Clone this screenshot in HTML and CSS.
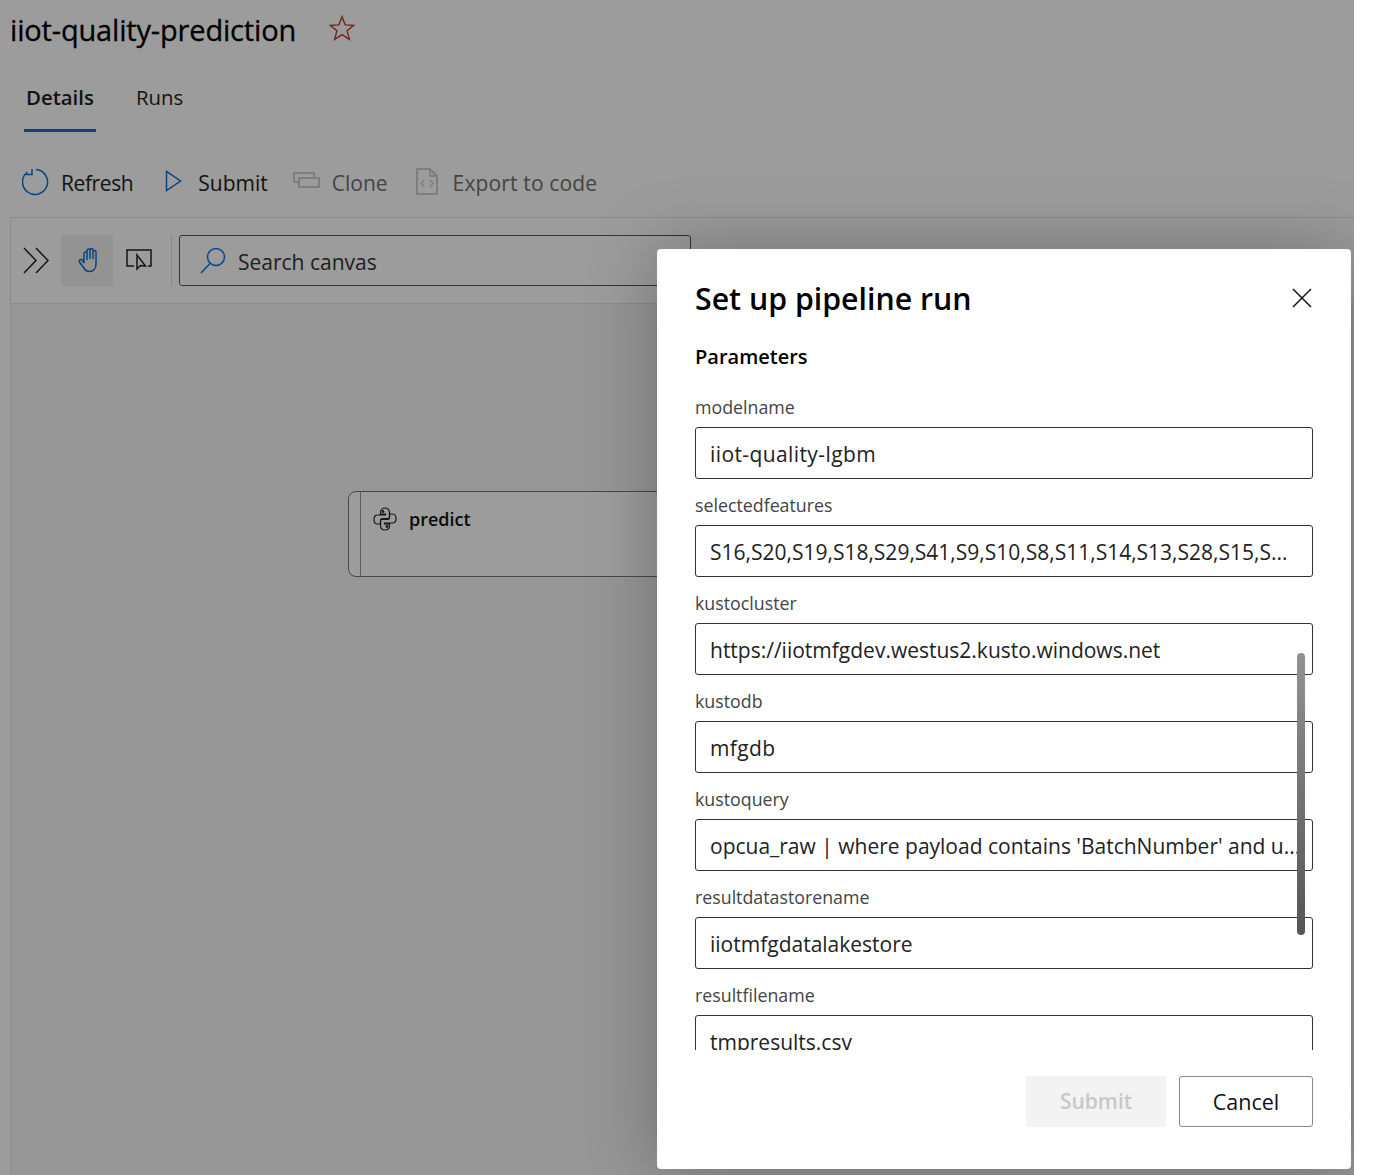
FILE: index.html
```html
<!DOCTYPE html>
<html lang="en">

<head>
    <meta charset="UTF-8">
    <title>iiot-quality-prediction</title>
    <link rel="stylesheet" href="styles.css">
</head>

<body>
    <div class="page">
        <div class="title-row">
            <h1 class="title">iiot-quality-prediction</h1>
            <svg class="star" viewBox="0 0 24 24"><path d="M12 1.500l2.900 7.600 8 .4-6.200 5.100 2.100 7.900L12 18.100l-6.800 4.400 2.100-7.900L1.100 9.500l8-.4z"/></svg>
        </div>
        <div class="tabs">
            <a class="tab active">Details</a>
            <a class="tab">Runs</a>
        </div>
        <div class="commands">
            <a class="cmd cmd-refresh">
                <svg class="ico blue" width="27" height="28" viewBox="0 0 27 28"><path d="M14 1.500A12.500 12.500 0 1 1 5.500 4"/><path d="M4 6.500h6V1"/></svg>
                <span>Refresh</span>
            </a>
            <a class="cmd cmd-submit">
                <svg class="ico blue" width="17" height="22" viewBox="0 0 17 22"><path d="M1.500 1.500v19L15.500 11z"/></svg>
                <span>Submit</span>
            </a>
            <a class="cmd cmd-clone off">
                <svg class="ico gray" width="27" height="16" viewBox="0 0 27 16"><path d="M6 10H1V1h20v5"/><path d="M6 6h20v9H6z"/></svg>
                <span>Clone</span>
            </a>
            <a class="cmd cmd-export off">
                <svg class="ico gray" width="22" height="27" viewBox="0 0 22 27"><path d="M1 1h13l7 7v18H1z"/><path d="M14 1v7h7"/><path d="M8 12l-3 3.500 3 3.500M14 12l3 3.500-3 3.500" stroke-width="1.400"/></svg>
                <span>Export to code</span>
            </a>
        </div>
        <div class="designer">
            <div class="toolbar">
                <svg class="ico dark chevrons" width="27" height="27" viewBox="0 0 27 27"><path d="M1 1l12 12.500L1 26"/><path d="M13 1l12 12.500L13 26"/></svg>
                <div class="tool tool-on">
                    <svg class="ico blue" width="24" height="26" viewBox="0 0 24 26"><path d="M6 16V6.500a1.500 1.500 0 0 1 3 0V13M9 12V3.500a1.500 1.500 0 0 1 3 0V12M12 12V3a1.500 1.500 0 0 1 3 0v9M15 12V5a1.500 1.500 0 0 1 3 0v12c0 5-3 7.500-6.500 7.500-3 0-4.500-1.500-6-4L1.500 15c-1-2 1.500-3.500 3-1.500L6 16"/></svg>
                </div>
                <div class="tool">
                    <svg class="ico dark" width="26" height="23" viewBox="0 0 26 23"><path d="M8 17H1V1h24v16h-3"/><path d="M11 6v14l3.500-3.500 5 .5z"/></svg>
                </div>
                <div class="tool-sep"></div>
                <div class="search">
                    <svg class="ico blue" width="26" height="27" viewBox="0 0 26 27"><circle cx="16" cy="10" r="8.500"/><path d="M10 16.500L1 26"/></svg>
                    <span>Search canvas</span>
                </div>
            </div>
            <div class="canvas">
                <div class="node">
                    <div class="node-bar"></div>
                    <svg class="py" width="24" height="24" viewBox="0 0 24 24">
                        <path d="M16.500 11.500V5.500C16.500 2.500 14.500 1 12 1S7.500 2.500 7.500 5.500V7h5v1H4.500C2 8 1 10 1 12.500S2 17 4.500 17h3v-3c0-1.500 1-2.500 2.500-2.500z"/>
                        <path d="M7.500 12.500v6C7.500 21.500 9.500 23 12 23s4.500-1.500 4.500-4.500V17h-5v-1h8c2.500 0 3.500-2 3.500-4.500S22 7 19.500 7h-3v3c0 1.500-1 2.500-2.500 2.500z"/>
                        <circle cx="10" cy="4.500" r=".8"/><circle cx="14" cy="19.500" r=".8"/>
                    </svg>
                    <span class="node-name">predict</span>
                </div>
            </div>
        </div>

        <div class="scrim"></div>

        <div class="dialog">
            <div class="dialog-head">
                <h2>Set up pipeline run</h2>
                <svg class="close" width="20" height="20" viewBox="0 0 20 20"><path d="M1 1l18 18M19 1L1 19"/></svg>
            </div>
            <div class="dialog-body">
                <div class="params">
                    <h3>Parameters</h3>
                    <div class="field">
                        <label>modelname</label>
                        <div class="input wide">iiot-quality-lgbm</div>
                    </div>
                    <div class="field">
                        <label>selectedfeatures</label>
                        <div class="input">S16,S20,S19,S18,S29,S41,S9,S10,S8,S11,S14,S13,S28,S15,S...</div>
                    </div>
                    <div class="field">
                        <label>kustocluster</label>
                        <div class="input">https://iiotmfgdev.westus2.kusto.windows.net</div>
                    </div>
                    <div class="field">
                        <label>kustodb</label>
                        <div class="input wide">mfgdb</div>
                    </div>
                    <div class="field">
                        <label>kustoquery</label>
                        <div class="input">opcua_raw | where payload contains 'BatchNumber' and u...</div>
                    </div>
                    <div class="field">
                        <label>resultdatastorename</label>
                        <div class="input">iiotmfgdatalakestore</div>
                    </div>
                    <div class="field">
                        <label>resultfilename</label>
                        <div class="input">tmpresults.csv</div>
                    </div>
                </div>
                <div class="scrollbar"></div>
            </div>
            <div class="dialog-foot">
                <button class="btn btn-submit" disabled>Submit</button>
                <button class="btn btn-cancel">Cancel</button>
            </div>
        </div>
    </div>
</body>

</html>
```

FILE: styles.css
```css
* {
    padding: 0px;
    margin: 0px;
    box-sizing: border-box;
}

html,
body {
    background: #fff;
}

body {
    font-family: "Open Sans", "Noto Sans", sans-serif;
    color: #000;
    height: 1175px;
    overflow: hidden;
}

.page {
    width: 1354px;
    height: 1175px;
    position: relative;
    overflow: hidden;
    background: #fff;
    display: flex;
    flex-direction: column;
}

.ico {
    fill: none;
    stroke-width: 1.5;
    flex: none;
}

.blue {
    stroke: #0a70d8;
}

.gray {
    stroke: #cfcfcf;
    stroke-width: 2;
}

.dark {
    stroke: #222;
}

.title-row {
    display: flex;
    align-items: center;
    margin-top: 10px;
    padding-left: 10px;
    height: 40px;
}

.title {
    font-size: 29px;
    font-weight: 400;
    line-height: 38px;
    letter-spacing: -0.17px;
    -webkit-text-stroke: 0.3px #000;
}

.star {
    width: 26px;
    height: 26px;
    margin: -4px 0 0 33px;
    fill: none;
    stroke: #c0392b;
    stroke-width: 1.3;
}

.tabs {
    display: flex;
    gap: 38px;
    margin-top: 16px;
    padding-left: 24px;
}

.tab {
    font-size: 20.400px;
    line-height: 34px;
    padding: 14px 2px 15px;
    border-bottom: 3px solid transparent;
    color: #222;
}

.tab.active {
    font-weight: 600;
    border-bottom-color: #0a70d8;
}

.commands {
    display: flex;
    align-items: center;
    height: 46px;
    margin-top: 28px;
    padding-left: 22px;
    font-size: 21px;
}

.cmd {
    display: flex;
    align-items: center;
    color: #222;
}

.cmd.off {
    color: #707070;
}

.cmd-refresh svg {
    margin: -3px 12px 0 0;
}

.cmd-refresh span {
    letter-spacing: -0.4px;
}

.cmd-submit {
    margin-left: 32px;
}

.cmd-submit svg {
    margin: -4px 16px 0 0;
}

.cmd-clone {
    margin-left: 25px;
}

.cmd-clone svg {
    margin: -6px 12px 0 0;
}

.cmd-export {
    margin-left: 28px;
}

.cmd-export svg {
    margin: -4px 15px 0 0;
}

.cmd-export span {
    letter-spacing: 0.14px;
}

.designer {
    flex: 1;
    margin: 11px 0 0 10px;
    border: 1px solid #e3e3e3;
    border-right: 0;
    border-bottom: 0;
    display: flex;
    flex-direction: column;
    background: #f5f5f5;
}

.toolbar {
    height: 86px;
    border-bottom: 1px solid #e3e3e3;
    display: flex;
    align-items: center;
    padding: 0 0 1px 12px;
    background: #fff;
}

.chevrons {
    margin-right: 11px;
}

.tool {
    width: 52px;
    height: 51px;
    display: flex;
    align-items: center;
    justify-content: center;
}

.tool-on {
    background: #f0f0f0;
    border-radius: 2px;
}

.tool-on svg {
    margin-left: 5px;
}

.tool-sep {
    width: 1px;
    height: 51px;
    background: #ddd;
    margin: 0 7px 0 6px;
}

.search {
    width: 512px;
    height: 51px;
    border: 1px solid #555;
    border-radius: 3px;
    display: flex;
    align-items: center;
    padding-left: 20px;
    font-size: 21px;
    color: #333;
}

.search svg {
    margin-right: 12px;
}

.search span {
    padding-top: 3px;
}

.canvas {
    flex: 1;
    position: relative;
}

.node {
    position: absolute;
    left: 337px;
    top: 187px;
    width: 420px;
    height: 86px;
    border: 1px solid #777;
    border-radius: 8px;
    display: flex;
    align-items: flex-start;
    background: #fff;
}

.node-bar {
    width: 12px;
    height: 100%;
    border-right: 1px solid #999;
}

.py {
    margin: 15px 0 0 12px;
    fill: none;
    stroke: #222;
    stroke-width: 1.2;
}

.node-name {
    font-size: 18px;
    font-weight: 600;
    line-height: 26px;
    margin: 14px 0 0 12px;
    color: #111;
}

.scrim {
    position: absolute;
    left: 0;
    top: 0;
    right: 0;
    bottom: 0;
    background: rgba(0, 0, 0, 0.39);
}

.dialog {
    position: absolute;
    left: 657px;
    top: 249px;
    width: 694px;
    height: 920px;
    padding: 0 38px;
    background: #fff;
    border-radius: 4px;
    box-shadow: 0 0 70px rgba(0, 0, 0, 0.28);
    display: flex;
    flex-direction: column;
}

.dialog-head {
    height: 101px;
    padding-top: 30px;
    position: relative;
}

.dialog-head h2 {
    font-size: 30.300px;
    font-weight: 600;
    line-height: 40px;
}

.close {
    position: absolute;
    right: 1px;
    top: 39px;
    fill: none;
    stroke: #111;
    stroke-width: 1.5;
}

.dialog-body {
    height: 700px;
    overflow: hidden;
    position: relative;
}

.params {
    margin-top: -7px;
}

.params h3 {
    font-size: 20px;
    font-weight: 600;
    line-height: 28px;
    margin-bottom: 20px;
}

.field {
    margin-bottom: 10px;
}

.field label {
    display: block;
    font-size: 17.800px;
    line-height: 32px;
    margin-bottom: 4px;
    color: #444;
}

.input {
    height: 52px;
    line-height: 52px;
    border: 1px solid #333;
    border-radius: 3px;
    padding: 0 14px;
    font-size: 21px;
    color: #222;
    white-space: nowrap;
    overflow: hidden;
}

.input.wide {
    letter-spacing: 0.4px;
}

.scrollbar {
    position: absolute;
    right: 8px;
    top: 303px;
    width: 8px;
    height: 282px;
    border-radius: 4px;
    background: linear-gradient(#929292, #555);
}

.dialog-foot {
    display: flex;
    justify-content: flex-end;
    gap: 13px;
    padding-top: 26px;
}

.btn {
    height: 51px;
    font-family: inherit;
    font-size: 21px;
    border-radius: 3px;
    padding-bottom: 1px;
}

.btn-submit {
    width: 140px;
    border: 0;
    background: #f3f3f3;
    color: #c8c8c8;
    font-weight: 600;
}

.btn-cancel {
    width: 134px;
    border: 1px solid #888;
    background: #fff;
    color: #111;
    font-size: 21.500px;
}
```
